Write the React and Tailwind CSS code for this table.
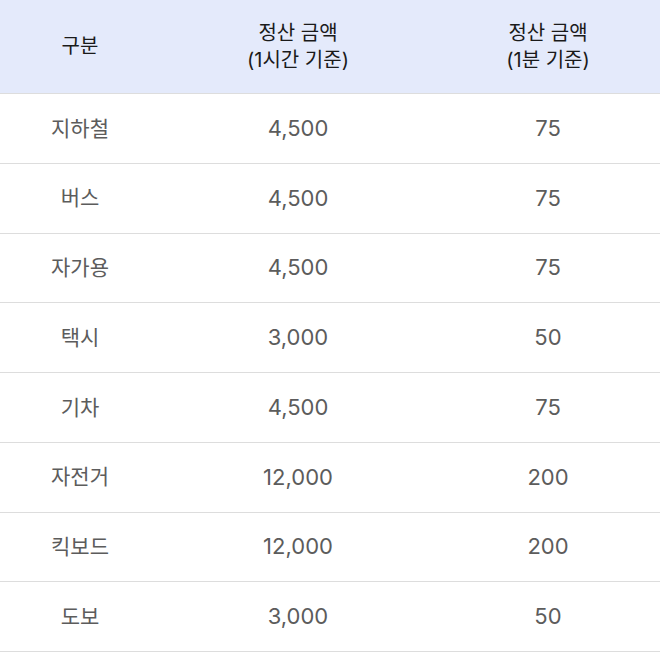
const rows = [
  ['지하철', '4,500', '75'],
  ['버스', '4,500', '75'],
  ['자가용', '4,500', '75'],
  ['택시', '3,000', '50'],
  ['기차', '4,500', '75'],
  ['자전거', '12,000', '200'],
  ['킥보드', '12,000', '200'],
  ['도보', '3,000', '50'],
];

const cols = 'grid grid-cols-[160px_276px_1fr]';

export default function App() {
  return (
    <div className="w-[660px] bg-white font-['Inter','Noto_Sans_CJK_KR',sans-serif]">
      <div className={`${cols} h-[94px] bg-[#e4eafb] border-b border-[#dddddd] text-[20px] leading-[27px] text-[#1a1a1a]`}>
        <div className="flex items-center justify-center">구분</div>
        <div className="flex flex-col items-center justify-center text-center">
          <span>정산 금액</span>
          <span>(1시간 기준)</span>
        </div>
        <div className="flex flex-col items-center justify-center text-center">
          <span>정산 금액</span>
          <span>(1분 기준)</span>
        </div>
      </div>
      {rows.map((r) => (
        <div key={r[0]} className={`${cols} h-[69.75px] border-b border-[#dddddd] text-[21px] text-[#5c5c5c]`}>
          {r.map((c, i) => (
            <div key={i} className={`flex items-center justify-center ${i > 0 ? 'text-[22px]' : ''}`}>{c}</div>
          ))}
        </div>
      ))}
    </div>
  );
}
